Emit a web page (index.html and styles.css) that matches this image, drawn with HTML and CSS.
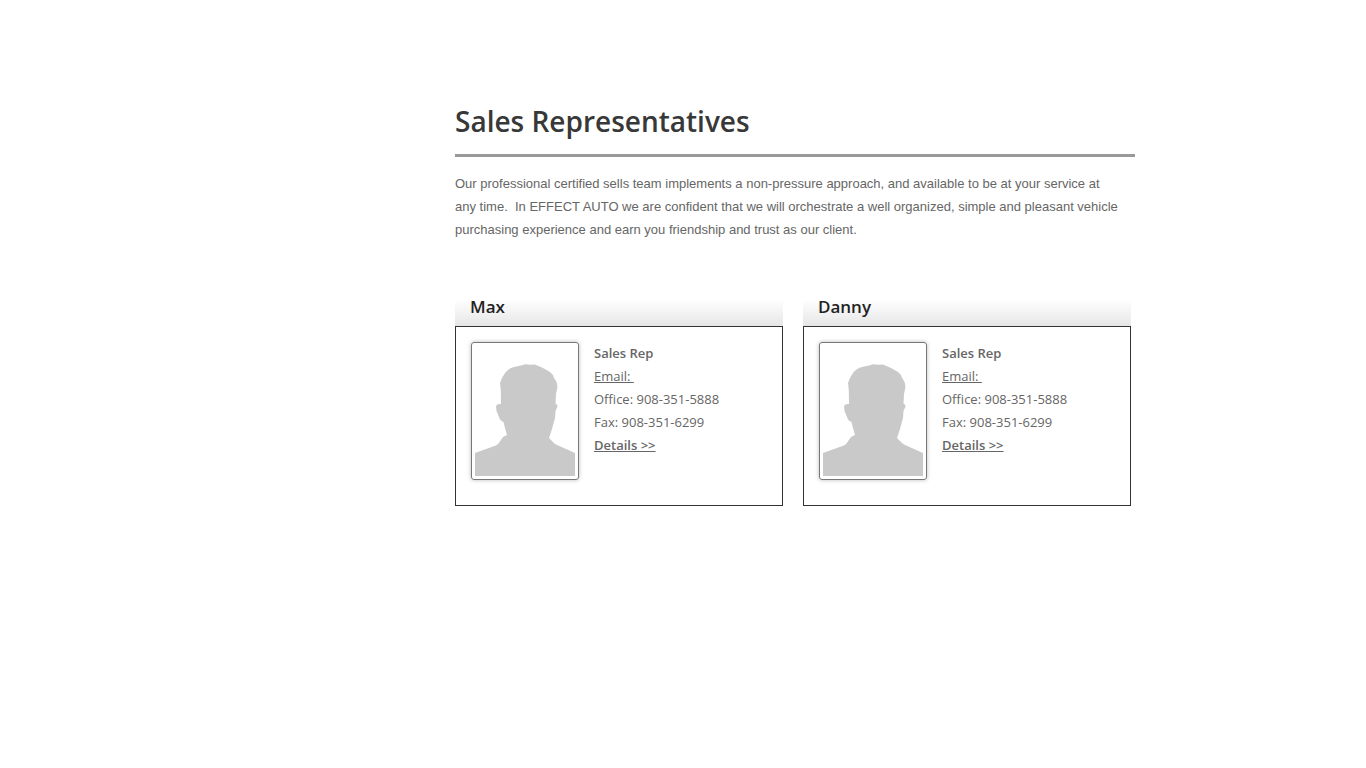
FILE: index.html
```html
<!DOCTYPE html>
<html lang="en">
<head>
<meta charset="utf-8">
<meta name="viewport" content="width=device-width, initial-scale=1">
<title>Sales Representatives</title>
<link rel="stylesheet" href="styles.css">
</head>
<body>
<svg width="0" height="0" class="defs" aria-hidden="true">
  <symbol id="person" viewBox="0 0 100 130">
    <path d="M0 107L18 100.500Q23 99 24.500 96L28 91L32 89L30 82L28.500 76Q25 75 24 71L21.500 65L21 60Q22 57.500 26 58L25.800 44L25 37Q27 31 30 27Q34 22 39 21L46 19.500L50 18.200L56 18.800L60 18.500L68 22L75 26Q78 28 79 32Q82 35 82.500 41L81 48L80.500 58Q83 58 82.300 61L80.500 65L80 72L77 83L74 92Q76 94 79 97L81 98.500L100 107V130H0Z"/>
  </symbol>
</svg>
<main class="page">
  <h1 class="title">Sales Representatives</h1>
  <p class="intro">Our professional certified sells team implements a non-pressure approach, and available to be at your service at<br>any time.&nbsp; In EFFECT AUTO we are confident that we will orchestrate a well organized, simple and pleasant vehicle<br>purchasing experience and earn you friendship and trust as our client.</p>
  <div class="team">
    <section class="rep">
      <h2 class="name">Max</h2>
      <div class="card">
        <svg class="photo" role="img" aria-label="Max"><use href="#person"/></svg>
        <div class="info">
          <strong>Sales Rep</strong>
          <a href="#">Email:&nbsp;</a>
          <span>Office: 908-351-5888</span>
          <span>Fax: 908-351-6299</span>
          <a class="details" href="#">Details &gt;&gt;</a>
        </div>
      </div>
    </section>
    <section class="rep">
      <h2 class="name">Danny</h2>
      <div class="card">
        <svg class="photo" role="img" aria-label="Danny"><use href="#person"/></svg>
        <div class="info">
          <strong>Sales Rep</strong>
          <a href="#">Email:&nbsp;</a>
          <span>Office: 908-351-5888</span>
          <span>Fax: 908-351-6299</span>
          <a class="details" href="#">Details &gt;&gt;</a>
        </div>
      </div>
    </section>
  </div>
</main>
</body>
</html>
```
FILE: styles.css
```css
* { box-sizing: border-box; }
body {
  margin: 0;
  background: #fff;
  color: #666;
  font: 13px/23px "Trebuchet MS", "Open Sans", sans-serif;
}
.defs { position: absolute; }
.page {
  max-width: 904px;
  margin: 0 auto;
  padding: 100px 0 40px 224px;
}
.title {
  margin: 0 0 15px;
  padding-bottom: 12px;
  border-bottom: 3px solid #999;
  color: #383838;
  font-size: 28px;
  font-weight: 600;
  line-height: 42px;
}
.intro {
  margin: 0;
  font-family: "Trebuchet MS", "Liberation Sans", sans-serif;
}
.team {
  display: grid;
  grid-template-columns: 1fr 1fr;
  gap: 20px;
  margin: 47px 4px 0 0;
}
.name {
  margin: 0;
  padding: 0 15px;
  color: #222;
  background: linear-gradient(#fff 30%, #e6e6e6);
  font-size: 17px;
  font-weight: 600;
  line-height: 38px;
}
.card {
  display: flex;
  gap: 15px;
  min-height: 180px;
  padding: 15px;
  border: 1px solid #333;
}
.photo {
  flex: none;
  width: 108px;
  height: 138px;
  padding: 3px;
  border: 1px solid #777;
  border-radius: 3px;
  box-shadow: 0 0 4px #bbb;
  fill: #c9c9c9;
}
.info {
  display: flex;
  flex-direction: column;
  align-items: flex-start;
}
.info a { color: #666; text-decoration: underline; }
.info strong, .info .details { font-weight: 600; }
```
